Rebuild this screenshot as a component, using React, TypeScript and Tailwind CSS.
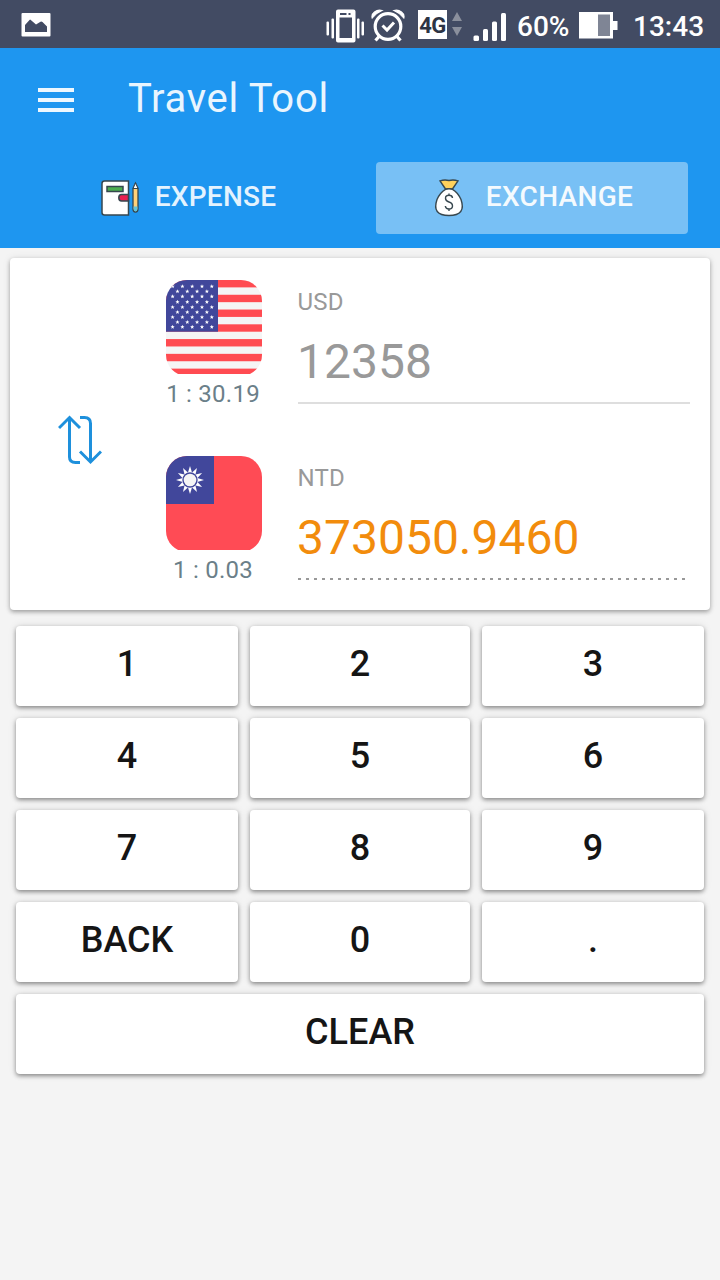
import React from "react";

function PictureIcon() {
  return (
    <svg className="h-6 w-[30px]" viewBox="0 0 30 24">
      <rect x="0.5" y="0" width="29" height="23.5" rx="1" fill="#fff" />
      <path d="M4 19V12L8.500 7Q9 6.200 9.800 7L15 11.500L19.500 8.700Q20.500 8 21.500 9L26 13.500V19Z" fill="#424b63" />
    </svg>
  );
}

function VibrateIcon() {
  return (
    <svg className="h-[34px] w-[38px]" viewBox="0 0 38 34" fill="#fff">
      <rect x="0.500" y="12.500" width="2.500" height="14" rx="1" />
      <rect x="5.500" y="9.500" width="2.500" height="20" rx="1" />
      <rect x="31" y="9.500" width="2.500" height="20" rx="1" />
      <rect x="35.500" y="12.500" width="2.500" height="14" rx="1" />
      <path fillRule="evenodd" d="M12 0.500H27.500Q29.500 0.500 29.500 2.500V31.500Q29.500 33.500 27.500 33.500H12Q10 33.500 10 31.500V2.500Q10 0.500 12 0.500ZM13.500 8.500V29H26V8.500ZM14 4V6H20.500V4ZM22.500 4V6H24.500V4Z" />
    </svg>
  );
}

function AlarmIcon() {
  return (
    <svg className="h-[34px] w-[36px]" viewBox="0 0 36 34" fill="none" stroke="#fff">
      <circle cx="18" cy="17.500" r="12.800" strokeWidth="3.200" />
      <path d="M12.500 16.500L17 21L24 13.500" strokeWidth="3" />
      <path d="M9.500 27L5.500 31.500M26.500 27L30.500 31.500" strokeWidth="3.200" />
      <path d="M2.200 9Q1.200 5.500 4.500 3Q8 0.300 12 1.500Q6 4 2.200 9ZM33.800 9Q34.800 5.500 31.500 3Q28 0.300 24 1.500Q30 4 33.800 9Z" fill="#fff" strokeWidth="1.200" />
    </svg>
  );
}

function StatusBar() {
  return (
    <div className="flex h-12 items-start bg-[#424b63] text-white">
      <div className="ml-[21px] mt-[13px]">
        <PictureIcon />
      </div>
      <div className="ml-[275px] mt-[9px]">
        <VibrateIcon />
      </div>
      <div className="ml-[6px] mt-[9px]">
        <AlarmIcon />
      </div>
      <div className="ml-[12px] mt-[10px] flex h-[29px] w-[29px] items-center justify-center bg-white pt-[2px] text-[22px] leading-none font-bold tracking-[-0.5px] text-[#2c3444]">
        4G
      </div>
      <svg className="ml-[4px] mt-[12px] h-6 w-3" viewBox="0 0 12 24" fill="#8a8f9c">
        <path d="M6 0L11 9H1ZM6 24L11 15H1Z" />
      </svg>
      <svg className="ml-[10px] mt-[12px] h-[29px] w-[34px]" viewBox="0 0 34 29" fill="#fff">
        <rect x="0.500" y="23.500" width="5.500" height="5.500" rx="1.500" />
        <rect x="10" y="17" width="5" height="12" rx="1.500" />
        <rect x="19" y="9.500" width="5" height="19.500" rx="1.500" />
        <rect x="28" y="1" width="5" height="28" rx="1.500" />
      </svg>
      <div className="ml-[10px] mt-[13px] w-[62px] text-[28px] leading-[28px] font-medium">60%</div>
      <svg className="mt-[12px] h-[27px] w-[39px]" viewBox="0 0 39 27">
        <path d="M0 0H34V9H38.500V18H34V26.500H0Z" fill="#fff" />
        <rect x="19" y="2.500" width="12" height="21.500" fill="#7f8595" />
      </svg>
      <div className="ml-[15px] mt-[13px] text-[28px] leading-[28px] font-medium">13:43</div>
    </div>
  );
}

function ExpenseIcon() {
  return (
    <svg className="h-9 w-10" viewBox="0 0 40 36" stroke="#37474f" strokeWidth="1.500">
      <path d="M4.500 1H28.500V35H4.500Q2 35 2 32.500V3.500Q2 1 4.500 1Z" fill="#fff" />
      <rect x="7" y="6.500" width="16" height="5" fill="#4caf50" />
      <path d="M28.500 14.500H21.500Q18.800 14.500 18.800 17.700Q18.800 20.900 21.500 20.900H28.500Z" fill="#e91e4f" />
      <path d="M33 8.500L35.500 3L38 8.500V29Q38 32 35.500 32Q33 32 33 29Z" fill="#ffd17a" strokeWidth="1.300" />
      <path d="M33.600 26.500H37.400V29Q37.400 31.400 35.500 31.400Q33.600 31.400 33.600 29Z" fill="#62c4dc" stroke="none" />
      <path d="M33 8.500L35.500 3L38 8.500Z" fill="#fff" strokeWidth="1" />
    </svg>
  );
}

function MoneyBagIcon() {
  return (
    <svg className="h-[38px] w-10" viewBox="0 0 40 38" stroke="#37474f" strokeWidth="1.400" fill="none">
      <path d="M11 1.800Q15.500 0.500 20 1.500Q24.500 0.500 29 1.800L23.500 10H16.500Z" fill="#ffd15c" />
      <path d="M16.500 10.300Q20 9.300 23.500 10.300Q29 13.500 32 20.500Q37.500 36.500 20 36.500Q2.500 36.500 8 20.500Q11 13.500 16.500 10.300Z" fill="#fff" />
      <path d="M23.500 19Q23.200 16.300 20 16.300Q16.500 16.300 16.500 19.300Q16.500 22 20 23Q23.500 24 23.500 27Q23.500 30 20 30Q16.700 30 16.300 27M20 14.500V16.300M20 30V32" />
    </svg>
  );
}

function Header() {
  return (
    <header className="h-[200px] bg-[#1e96f0] text-white">
      <div className="flex h-[114px] items-start pl-[38px]">
        <div className="mt-10 flex w-9 flex-col gap-[6px]">
          <span className="h-1 bg-[#eef7fe]" />
          <span className="h-1 bg-[#eef7fe]" />
          <span className="h-1 bg-[#eef7fe]" />
        </div>
        <h1 className="ml-[54px] mt-[27px] text-[40px] leading-[48px] font-normal tracking-[0.700px] text-[#e9f5fe]">Travel Tool</h1>
      </div>
      <nav className="grid grid-cols-2 gap-8 px-8 text-[28px] font-medium">
        <button className="flex h-[72px] items-center justify-center rounded text-[#e4f3fe]">
          <ExpenseIcon />
          <span className="ml-[15px] pb-[2px] tracking-[0.250px]">EXPENSE</span>
        </button>
        <button className="flex h-[72px] items-center justify-center rounded bg-[#78c0f5] pr-[2px] text-[#f4fafe]">
          <MoneyBagIcon />
          <span className="ml-[17px] pb-[2px] tracking-[0.300px]">EXCHANGE</span>
        </button>
      </nav>
    </header>
  );
}

const STAR = "0,-2.200 0.600,-0.700 2.100,-0.700 0.900,0.300 1.300,1.800 0,0.900 -1.300,1.800 -0.900,0.300 -2.100,-0.700 -0.600,-0.700";
const outerStars = [6.4, 16.5, 27.1, 37.2, 47].flatMap((y) => [6.6, 16.4, 26.2, 36, 45.8].map((x) => ({ x, y })));
const innerStars = [11.4, 22, 32.2, 42.1].flatMap((y) => [11.5, 21.3, 31.1, 40.9].map((x) => ({ x, y })));

function UsFlag() {
  return (
    <svg className="h-[94px] w-24" viewBox="0 0 96 94">
      <clipPath id="us-clip">
        <rect width="96" height="96" rx="21" />
      </clipPath>
      <g clipPath="url(#us-clip)">
        <rect width="96" height="96" fill="#f5f5f5" />
        {[0, 2, 4, 6, 8, 10, 12].map((n) => (
          <rect key={n} y={n * 7.385} width="96" height="7.385" fill="#ff4b51" />
        ))}
        <rect width="52" height="51.700" fill="#41479b" />
        {[...outerStars, ...innerStars].map((s, i) => (
          <polygon key={i} points={STAR} transform={`translate(${s.x} ${s.y})`} fill="#fff" />
        ))}
      </g>
    </svg>
  );
}

function TaiwanFlag() {
  return (
    <svg className="h-[94px] w-24" viewBox="0 0 96 94">
      <clipPath id="tw-clip">
        <rect width="96" height="96" rx="21" />
      </clipPath>
      <g clipPath="url(#tw-clip)">
        <rect width="96" height="96" fill="#ff4b55" />
        <rect width="48" height="48" fill="#41479b" />
        {Array.from({ length: 12 }, (_, i) => (
          <path key={i} d="M24 10L26.300 17.500H21.700Z" fill="#fff" transform={`rotate(${i * 30} 24 24)`} />
        ))}
        <circle cx="24" cy="24" r="7.700" fill="#41479b" />
        <circle cx="24" cy="24" r="6.300" fill="#f5f5f5" />
      </g>
    </svg>
  );
}

function SwapIcon() {
  return (
    <svg className="h-[50px] w-11" viewBox="0 0 44 50" fill="none" stroke="#1e90dc" strokeWidth="3">
      <path d="M1 13L11.500 2.500L22 13M11.500 3V42Q11.500 47.500 17.500 47.500H22" />
      <path d="M22 2.500H26.500Q32.500 2.500 32.500 8.500V46M22 36.500L32.500 47L43 36.500" />
    </svg>
  );
}

type CurrencyRowProps = {
  flag: React.ReactNode;
  rate: string;
  code: string;
  amount: string;
  result?: boolean;
};

function CurrencyRow({ flag, rate, code, amount, result }: CurrencyRowProps) {
  return (
    <div className="flex h-44 pt-[22px]">
      <div className="flex w-24 flex-col items-center">
        {flag}
        <div className="mt-[6px] -ml-[2px] text-2xl leading-7 tracking-[0.250px] whitespace-nowrap text-[#6b7f89]">{rate}</div>
      </div>
      <div className="ml-9 flex w-[392px] flex-col">
        <div className="mt-2 -ml-[0.5px] text-2xl leading-7 tracking-[0.200px] text-[#999]">{code}</div>
        <div className={result ? "mt-[18px] -ml-px text-5xl leading-[56px] text-[#f28c0c]" : "mt-[18px] -ml-px text-5xl leading-[56px] text-[#999]"}>{amount}</div>
        {result ? (
          <div className="mt-[12px] h-[2px] w-[387px] bg-[repeating-linear-gradient(to_right,#999_0_3px,transparent_3px_8px)]" />
        ) : (
          <div className="mt-[12px] h-[2px] bg-[#dedede]" />
        )}
      </div>
    </div>
  );
}

function ExchangeCard() {
  return (
    <section className="mx-[10px] mt-[10px] flex h-[352px] rounded bg-white shadow-[0_2px_4px_rgba(0,0,0,0.320),0_0_8px_rgba(0,0,0,0.080)]">
      <div className="w-[156px] pt-[157px] pl-12">
        <SwapIcon />
      </div>
      <div>
        <CurrencyRow flag={<UsFlag />} rate="1 : 30.19" code="USD" amount="12358" />
        <CurrencyRow flag={<TaiwanFlag />} rate="1 : 0.03" code="NTD" amount="373050.9460" result />
      </div>
    </section>
  );
}

const KEYS = ["1", "2", "3", "4", "5", "6", "7", "8", "9", "BACK", "0", ".", "CLEAR"];

function Keypad() {
  return (
    <div className="mx-4 mt-4 grid grid-cols-[222px_220px_222px] gap-3">
      {KEYS.map((k) => (
        <button
          key={k}
          className={
            (k === "CLEAR" ? "col-span-3 " : "") +
            "flex h-20 items-center justify-center rounded bg-white pb-[5px] text-4xl leading-[44px] font-medium text-[#151515] shadow-[0_2px_4px_rgba(0,0,0,0.400),0_0_8px_rgba(0,0,0,0.100)]"
          }
        >
          {k}
        </button>
      ))}
    </div>
  );
}

export default function App() {
  return (
    <div className="h-[1280px] w-[720px] overflow-hidden bg-[#f4f4f4] font-['Roboto',sans-serif]">
      <StatusBar />
      <Header />
      <ExchangeCard />
      <Keypad />
    </div>
  );
}
